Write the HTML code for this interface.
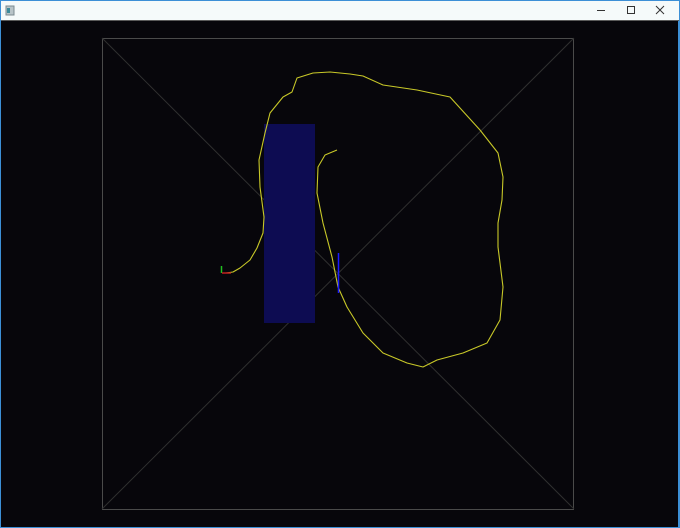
<!DOCTYPE html><html><head><style>body{margin:0;width:680px;height:528px;overflow:hidden;background:#fff}</style></head><body>
<svg width="680" height="528" style="display:block">
<rect x="0" y="0" width="680" height="528" fill="#3c8fd6"/>
<rect x="1" y="1" width="678" height="19" fill="#f5fafa"/>
<rect x="1" y="20" width="678" height="1" fill="#5a5a5a"/>
<rect x="1" y="21" width="677" height="506" fill="#07060b"/>
<rect x="6" y="6" width="8" height="9" fill="#b8c4c8" stroke="#7a8a90" stroke-width="1"/>
<rect x="7" y="8" width="3" height="5" fill="#3a8a9a"/>
<line x1="597" y1="10.5" x2="605" y2="10.5" stroke="#333" stroke-width="1"/>
<rect x="627.5" y="6.5" width="7" height="7" fill="none" stroke="#333"/>
<path d="M656 6 L664 14 M664 6 L656 14" stroke="#333" stroke-width="1"/>
<rect x="102.5" y="38.5" width="471" height="471" fill="none" stroke="#4a4a4a" stroke-width="1"/>
<line x1="102" y1="38" x2="574" y2="509" stroke="#303030"/>
<line x1="574" y1="38" x2="102" y2="509" stroke="#303030"/>
<rect x="264" y="124" width="51" height="199" fill="#0d0c52"/>
<polyline fill="none" stroke="#c8c828" stroke-width="1.1" stroke-linejoin="round" points="226,273 233,272 240,268 250,260 257,248 263,233 264,217 260,187 259,160 265,133 270,113 283,97 292,92 297,78 313,73 330,72 350,74 363,76 383,85 417,90 450,97 480,130 498,153 503,177 502,200 498,223 498,247 503,287 500,320 487,343 463,353 437,360 423,367 407,363 383,353 363,333 347,307 338,287 332,257 323,223 317,193 318,167 325,155 337,150"/>
<line x1="221.5" y1="266" x2="221.5" y2="273" stroke="#20c020" stroke-width="1.5"/>
<line x1="222" y1="273" x2="231" y2="273" stroke="#c02020" stroke-width="1.5"/>
<line x1="338.5" y1="253" x2="338.5" y2="293" stroke="#1a1aff" stroke-width="1.5"/>
</svg>
</body></html>
